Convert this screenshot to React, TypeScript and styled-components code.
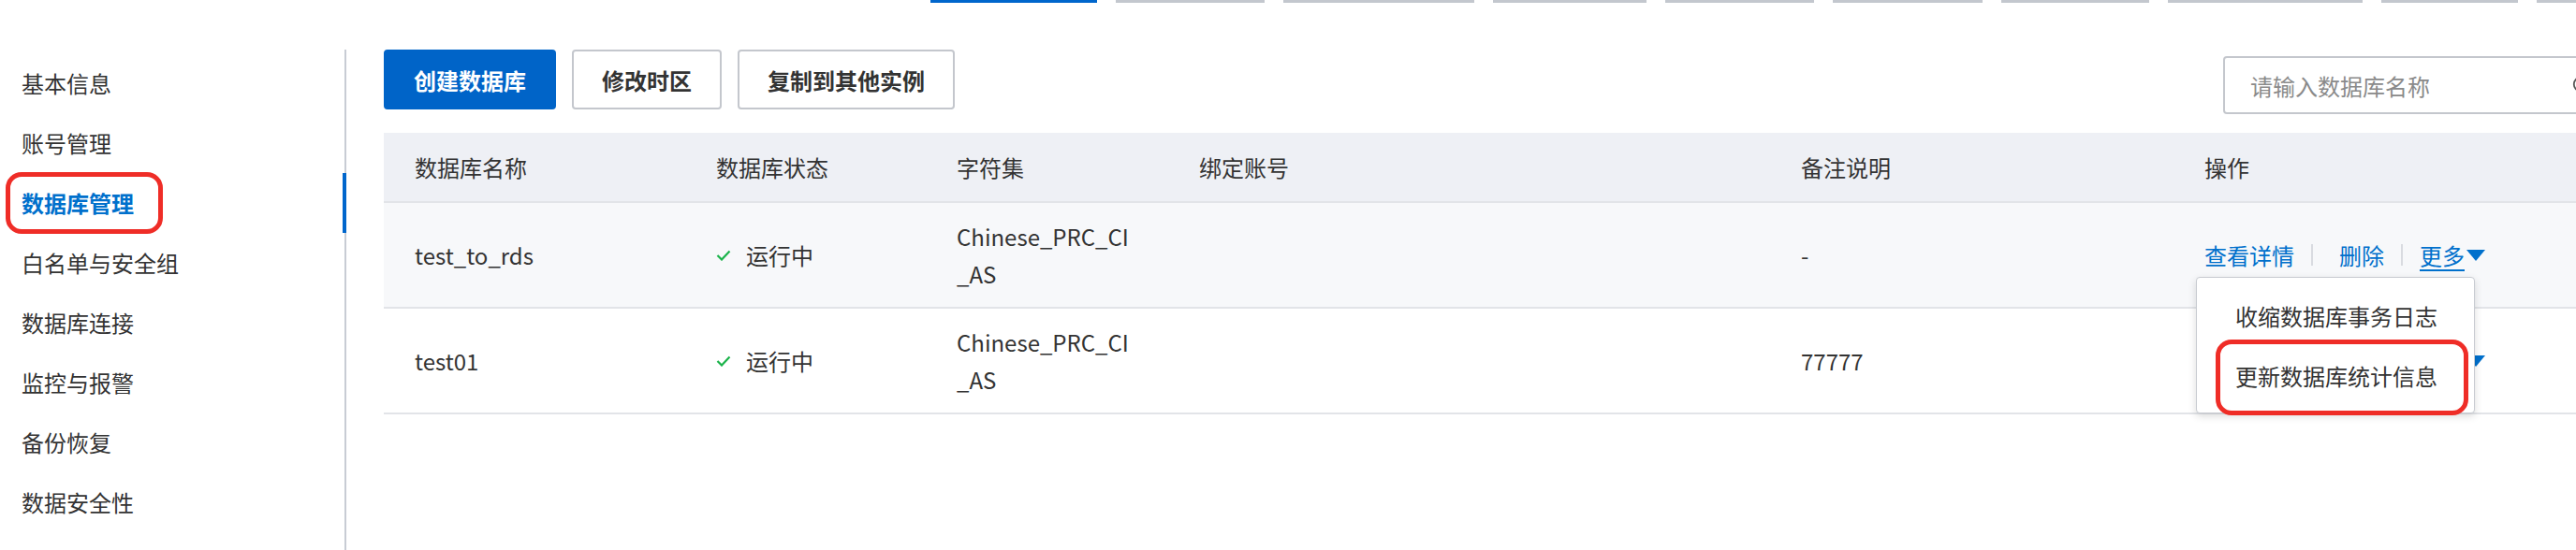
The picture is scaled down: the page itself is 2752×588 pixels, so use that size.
import React from 'react';
import styled, { createGlobalStyle } from 'styled-components';
import { Search } from 'lucide-react';

const GlobalStyle = createGlobalStyle`
    html, body {
        margin: 0;
        padding: 0;
        background: #ffffff;
        overflow: hidden;
    }
    body {
        font-family: "Noto Sans CJK SC", "Noto Sans", sans-serif;
        color: #333333;
    }
    * {
        box-sizing: border-box;
    }
`;

const Page = styled.div`
    display: flex;
    flex-direction: column;
    height: 100vh;
    width: 2752px;
`;

const TabStrip = styled.div`
    display: flex;
    gap: 20px;
    height: 3px;
    padding-left: 994px;
    flex-shrink: 0;
`;

const TabLine = styled.div<{ $w: number; $active?: boolean }>`
    flex-shrink: 0;
    width: ${p => p.$w}px;
    height: 3px;
    background: ${p => (p.$active ? '#0066cc' : '#c3c7ce')};
`;

const Body = styled.div`
    display: flex;
    flex: 1;
    padding-top: 50px;
    min-height: 0;
`;

const Sidebar = styled.nav`
    width: 370px;
    flex-shrink: 0;
    border-right: 2px solid #c8ccd4;
    padding-top: 4px;
`;

const NavItem = styled.div<{ $active?: boolean }>`
    position: relative;
    height: 64px;
    line-height: 64px;
    padding-left: 23px;
    font-size: 24px;
    color: ${p => (p.$active ? '#0070cc' : '#333333')};
    font-weight: ${p => (p.$active ? 700 : 400)};

    ${p =>
        p.$active &&
        `
        &::after {
            content: '';
            position: absolute;
            top: 0;
            bottom: 0;
            right: -2px;
            width: 4px;
            background: #0066cc;
        }
    `}
`;

const Mark = styled.div<{ $left: number; $top: number; $w: number; $h: number }>`
    position: absolute;
    left: ${p => p.$left}px;
    top: ${p => p.$top}px;
    width: ${p => p.$w}px;
    height: ${p => p.$h}px;
    border: 5px solid #ef2d27;
    border-radius: 17px;
    pointer-events: none;
    z-index: 5;
`;

const Main = styled.main`
    flex: 1;
    min-width: 0;
    padding-left: 40px;
`;

const Toolbar = styled.div`
    display: flex;
    align-items: flex-start;
    gap: 17px;
`;

const Button = styled.button<{ $primary?: boolean }>`
    height: 64px;
    padding: 0 30px;
    border-radius: 4px;
    border: 2px solid ${p => (p.$primary ? '#0064c8' : '#c4c7cd')};
    background: ${p => (p.$primary ? '#0064c8' : '#ffffff')};
    color: ${p => (p.$primary ? '#ffffff' : '#333333')};
    font-family: inherit;
    font-size: 24px;
    font-weight: 600;
    white-space: nowrap;
`;

const SearchBox = styled.div`
    display: flex;
    align-items: center;
    width: 420px;
    height: 62px;
    margin-top: 7px;
    margin-left: auto;
    margin-right: -43px;
    padding: 0 24px 0 25px;
    border: 2px solid #c4c7cd;
    border-radius: 4px;
    background: #ffffff;
`;

const SearchInput = styled.input`
    flex: 1;
    min-width: 0;
    border: none;
    outline: none;
    background: transparent;
    font-family: inherit;
    font-size: 24px;
    color: #333333;

    &::placeholder {
        color: #8a8a8a;
    }
`;

const Table = styled.div`
    margin-top: 20px;
`;

const Row = styled.div<{ $head?: boolean; $hover?: boolean }>`
    display: grid;
    grid-template-columns: 322px 257px 259px 643px 431px 1fr;
    align-items: center;
    height: ${p => (p.$head ? 75 : 113)}px;
    border-bottom: 2px solid #e2e4e8;
    background: ${p => (p.$head ? '#eef0f5' : p.$hover ? '#f7f8fa' : '#ffffff')};
`;

const Cell = styled.div`
    padding-left: 33px;
    font-size: 24px;
    line-height: 40px;
    color: #333333;
`;

const Status = styled(Cell)`
    display: flex;
    align-items: center;
    gap: 16px;
`;

const Actions = styled.div`
    position: relative;
    display: flex;
    align-items: center;
    margin-left: 33px;
    line-height: 34px;
    font-size: 24px;
`;

const Link = styled.span<{ $pad?: number }>`
    color: #0070cc;
    padding-left: ${p => p.$pad ?? 0}px;
`;

const More = styled.span`
    display: inline-flex;
    align-items: center;
    gap: 2px;
    color: #0070cc;

    > span {
        text-decoration: underline;
        text-underline-offset: 5px;
    }
`;

const Sep = styled.span`
    width: 2px;
    height: 23px;
    margin: 0 18px;
    background: #d9dbe0;
`;

const Menu = styled.div`
    position: absolute;
    left: -9px;
    top: calc(100% + 6px);
    width: 298px;
    padding: 9px 0 7px;
    border: 1px solid #c8cbd1;
    border-radius: 4px;
    background: #ffffff;
    box-shadow: 0 3px 8px rgba(0, 0, 0, 0.14);
    z-index: 10;
`;

const MenuItem = styled.div`
    position: relative;
    height: 64px;
    line-height: 64px;
    padding-left: 41px;
    font-size: 24px;
    color: #333333;
    white-space: nowrap;
`;

const CheckIcon = () => (
    <svg width="16" height="12" viewBox="0 0 16 12">
        <polyline points="1.5,6 6,10.5 14.5,1.5" fill="none" stroke="#1ab34a" strokeWidth="2.2" />
    </svg>
);

const Caret = () => (
    <svg width="20" height="12" viewBox="0 0 20 12">
        <polygon points="0,0 20,0 10,12" fill="#0070cc" />
    </svg>
);

const tabs = [178, 159, 204, 164, 159, 160, 158, 208, 146, 85];

const navItems = ['基本信息', '账号管理', '数据库管理', '白名单与安全组', '数据库连接', '监控与报警', '备份恢复', '数据安全性'];

const databases = [
    { name: 'test_to_rds', charset: ['Chinese_PRC_CI', '_AS'], remark: '-' },
    { name: 'test01', charset: ['Chinese_PRC_CI', '_AS'], remark: '77777' },
];

const RowActions = ({ open }: { open?: boolean }) => (
    <Actions>
        <Link>查看详情</Link>
        <Sep />
        <Link $pad={10}>删除</Link>
        <Sep />
        <More>
            <span>更多</span>
            <Caret />
        </More>
        {open && (
            <Menu>
                <MenuItem>收缩数据库事务日志</MenuItem>
                <MenuItem>
                    更新数据库统计信息
                    <Mark $left={20} $top={-7} $w={270} $h={81} />
                </MenuItem>
            </Menu>
        )}
    </Actions>
);

export default function App() {
    return (
        <Page>
            <GlobalStyle />
            <TabStrip>
                {tabs.map((w, i) => (
                    <TabLine key={i} $w={w} $active={i === 0} />
                ))}
            </TabStrip>
            <Body>
                <Sidebar>
                    {navItems.map(item => (
                        <NavItem key={item} $active={item === '数据库管理'}>
                            {item}
                            {item === '数据库管理' && <Mark $left={6} $top={-1} $w={168} $h={66} />}
                        </NavItem>
                    ))}
                </Sidebar>
                <Main>
                    <Toolbar>
                        <Button $primary>创建数据库</Button>
                        <Button>修改时区</Button>
                        <Button>复制到其他实例</Button>
                        <SearchBox>
                            <SearchInput placeholder="请输入数据库名称" />
                            <Search size={22} color="#555" />
                        </SearchBox>
                    </Toolbar>
                    <Table>
                        <Row $head>
                            <Cell>数据库名称</Cell>
                            <Cell>数据库状态</Cell>
                            <Cell>字符集</Cell>
                            <Cell>绑定账号</Cell>
                            <Cell>备注说明</Cell>
                            <Cell>操作</Cell>
                        </Row>
                        {databases.map((db, i) => (
                            <Row key={db.name} $hover={i === 0}>
                                <Cell>{db.name}</Cell>
                                <Status>
                                    <CheckIcon />
                                    运行中
                                </Status>
                                <Cell>
                                    {db.charset[0]}
                                    <br />
                                    {db.charset[1]}
                                </Cell>
                                <Cell />
                                <Cell>{db.remark}</Cell>
                                <div>
                                    <RowActions open={i === 0} />
                                </div>
                            </Row>
                        ))}
                    </Table>
                </Main>
            </Body>
        </Page>
    );
}
